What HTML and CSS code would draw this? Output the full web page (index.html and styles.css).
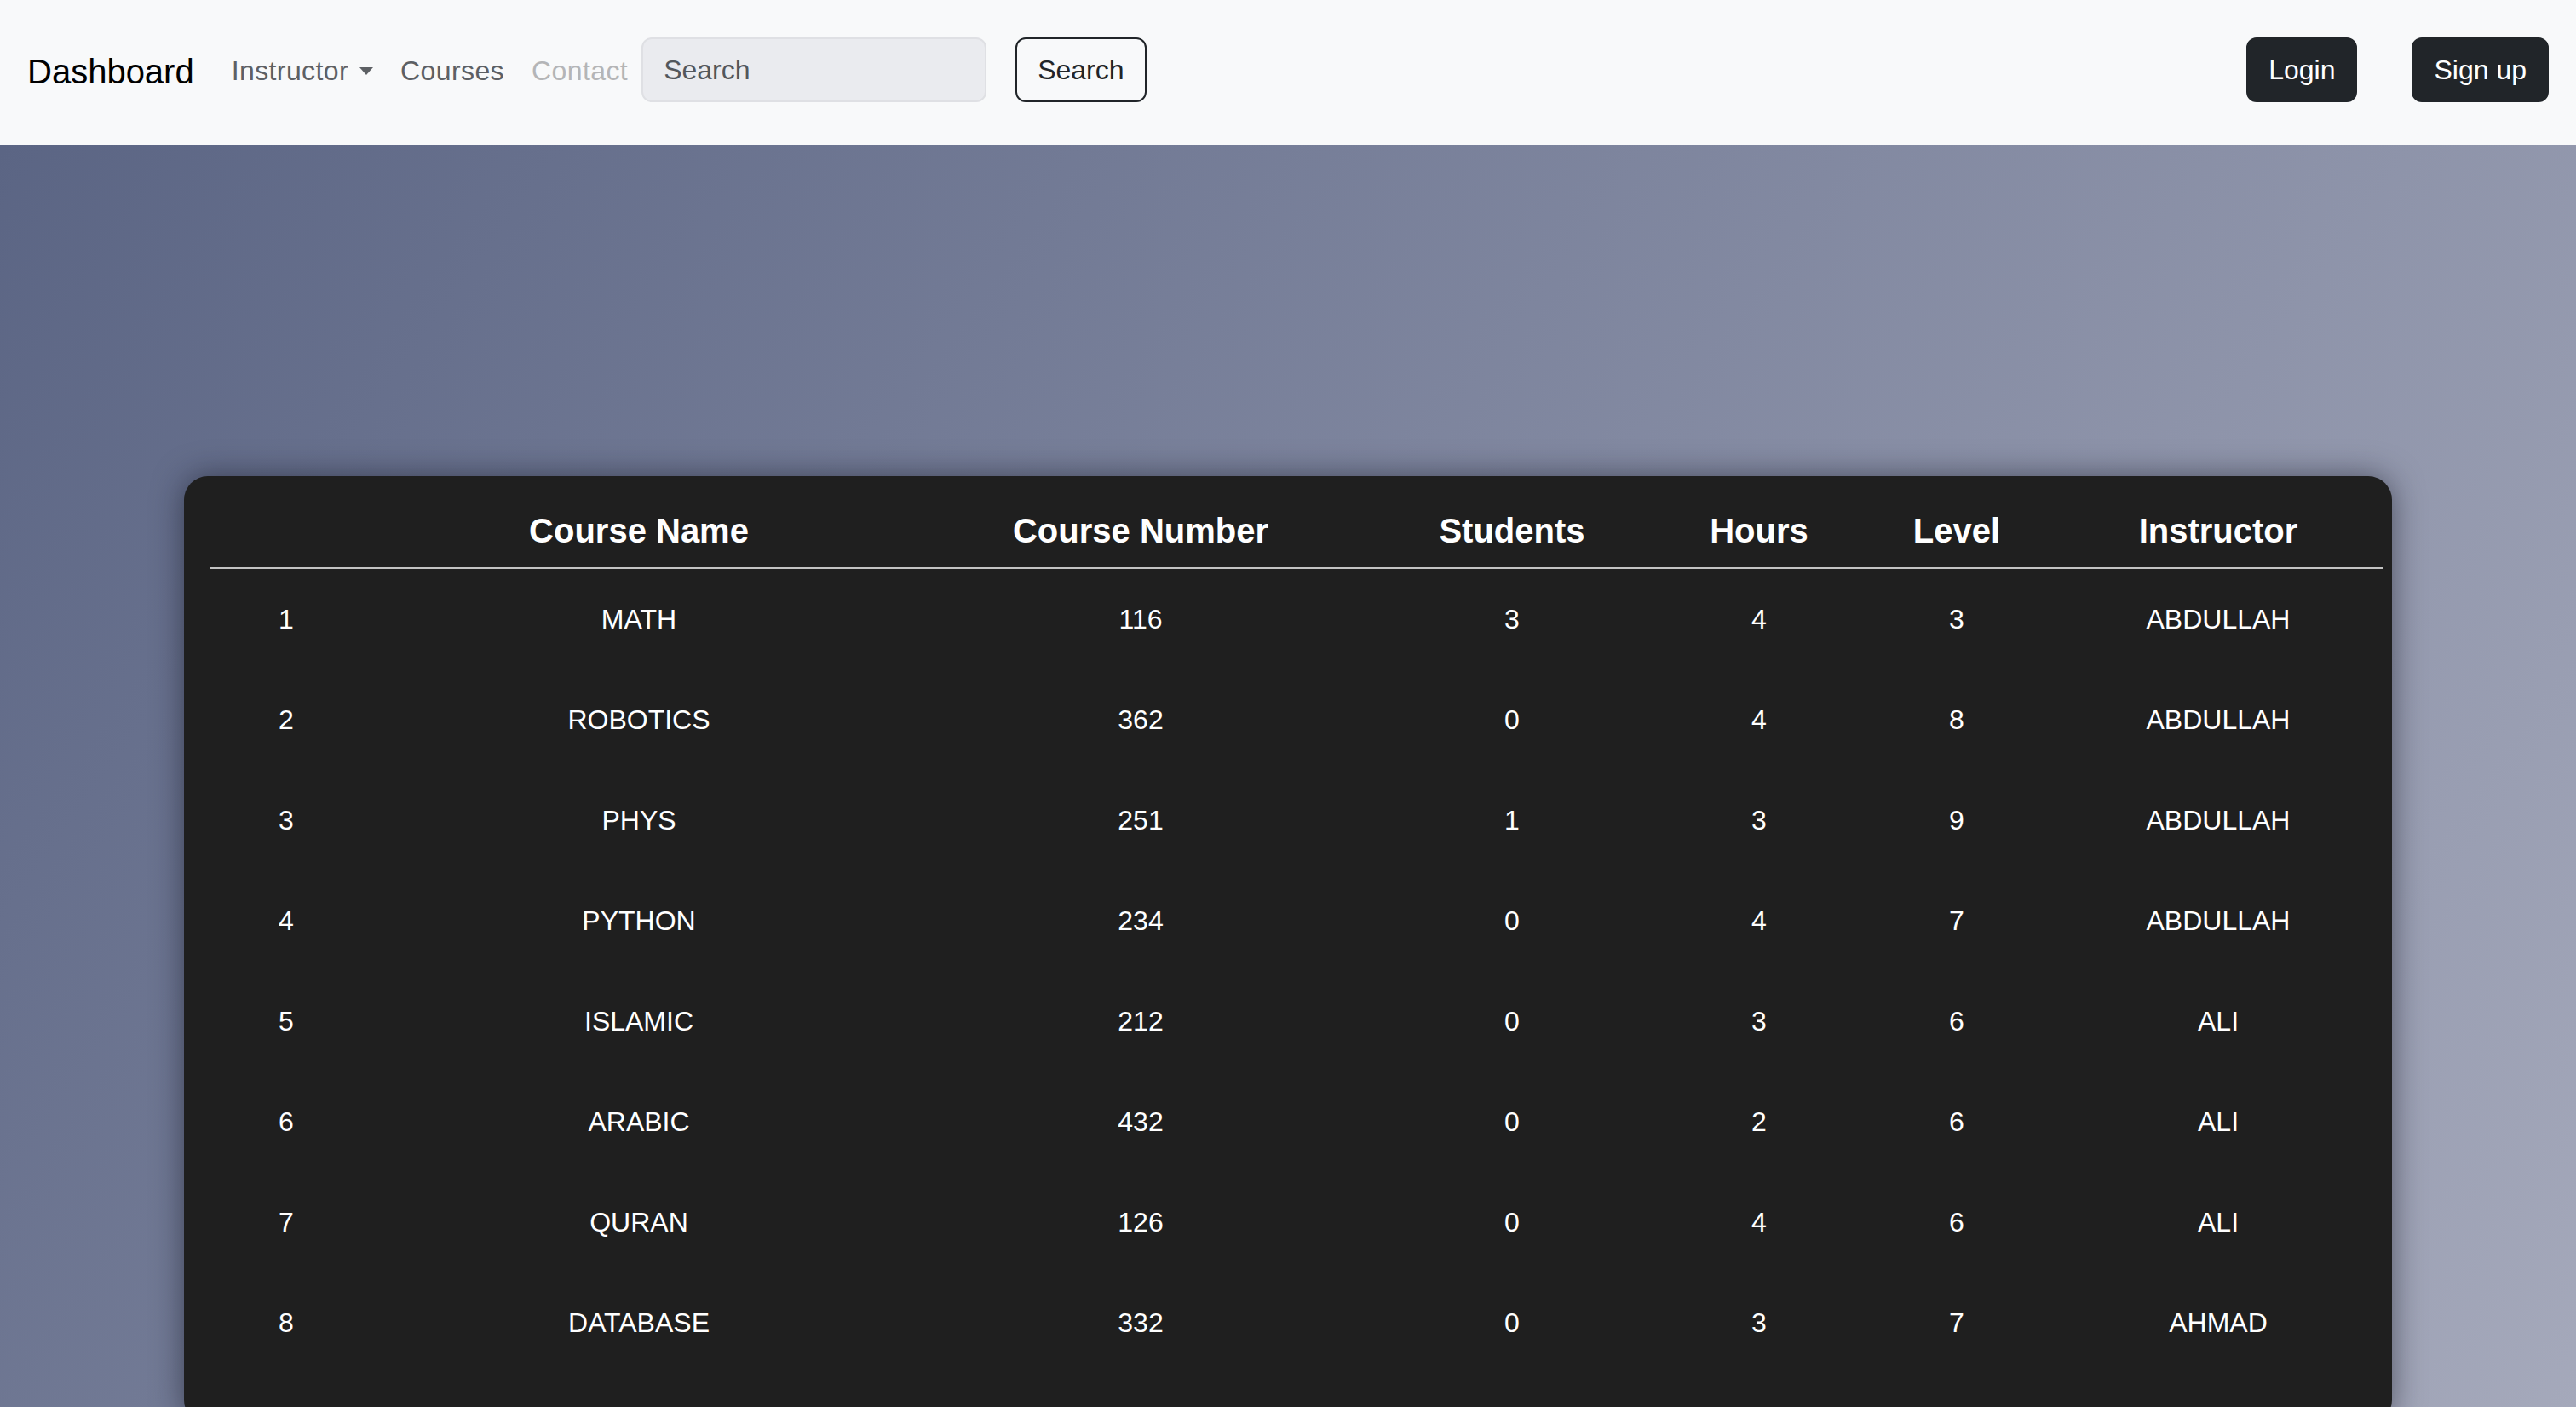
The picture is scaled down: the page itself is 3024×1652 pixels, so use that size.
FILE: index.html
```html
<!DOCTYPE html>
<html lang="en">
<head>
<meta charset="utf-8">
<title>Dashboard</title>
<link rel="stylesheet" href="styles.css">
</head>
<body>
<nav class="navbar">
  <a class="brand" href="#">Dashboard</a>
  <ul class="nav">
    <li><a class="nav-link dropdown" href="#">Instructor<span class="caret"></span></a></li>
    <li><a class="nav-link" href="#">Courses</a></li>
    <li><a class="nav-link disabled" href="#">Contact</a></li>
  </ul>
  <form class="search">
    <input class="search-input" type="search" placeholder="Search">
    <button class="btn btn-outline" type="button">Search</button>
  </form>
  <div class="auth">
    <button class="btn btn-dark" type="button">Login</button>
    <button class="btn btn-dark" type="button">Sign up</button>
  </div>
</nav>
<main class="main">
  <section class="card">
    <table class="courses">
      <colgroup>
        <col class="c-num"><col class="c-name"><col class="c-number"><col class="c-students"><col class="c-hours"><col class="c-level"><col class="c-instr">
      </colgroup>
      <thead>
        <tr><th></th><th>Course Name</th><th>Course Number</th><th>Students</th><th>Hours</th><th>Level</th><th>Instructor</th></tr>
      </thead>
      <tbody>
        <tr><td>1</td><td>MATH</td><td>116</td><td>3</td><td>4</td><td>3</td><td>ABDULLAH</td></tr>
        <tr><td>2</td><td>ROBOTICS</td><td>362</td><td>0</td><td>4</td><td>8</td><td>ABDULLAH</td></tr>
        <tr><td>3</td><td>PHYS</td><td>251</td><td>1</td><td>3</td><td>9</td><td>ABDULLAH</td></tr>
        <tr><td>4</td><td>PYTHON</td><td>234</td><td>0</td><td>4</td><td>7</td><td>ABDULLAH</td></tr>
        <tr><td>5</td><td>ISLAMIC</td><td>212</td><td>0</td><td>3</td><td>6</td><td>ALI</td></tr>
        <tr><td>6</td><td>ARABIC</td><td>432</td><td>0</td><td>2</td><td>6</td><td>ALI</td></tr>
        <tr><td>7</td><td>QURAN</td><td>126</td><td>0</td><td>4</td><td>6</td><td>ALI</td></tr>
        <tr><td>8</td><td>DATABASE</td><td>332</td><td>0</td><td>3</td><td>7</td><td>AHMAD</td></tr>
      </tbody>
    </table>
  </section>
</main>
</body>
</html>
```
FILE: styles.css
```css
* { box-sizing: border-box; }
html, body { margin: 0; padding: 0; }
body {
  font-family: "Liberation Sans", Arial, sans-serif;
  font-size: 32px;
  line-height: 48px;
  color: #212529;
  background: #a5a9bb;
}
.navbar {
  height: 170px;
  background: #f8f9fa;
  display: flex;
  align-items: center;
  padding: 0 32px 6px 32px;
}
.brand {
  font-size: 40px;
  line-height: 60px;
  color: #000;
  text-decoration: none;
  margin-right: 28px;
  padding-top: 3px;
}
.nav {
  display: flex;
  list-style: none;
  margin: 0;
  padding: 0;
}
.nav-link {
  display: flex;
  align-items: center;
  padding: 0 16px;
  color: #5d6064;
  text-decoration: none;
  line-height: 48px;
  padding-top: 2px;
  letter-spacing: 0.4px;
}
.nav-link.disabled { color: #b4b5b7; }
.caret {
  display: inline-block;
  margin-left: 13px;
  width: 0;
  height: 0;
  border-left: 8px solid transparent;
  border-right: 8px solid transparent;
  border-top: 9px solid #5d6064;
}
.search {
  display: flex;
  align-items: center;
  margin: 0;
}
.search-input {
  width: 405px;
  height: 76px;
  padding: 12px 24px;
  font: inherit;
  color: #212529;
  background: #eaebef;
  border: 2px solid #dfe0e4;
  border-radius: 12px;
  margin-right: 34px;
  outline: none;
}
.search-input::placeholder { color: #53575c; }
.btn {
  font: inherit;
  line-height: 48px;
  padding: 12px 24px;
  border-radius: 12px;
  border: 2px solid #212529;
  cursor: pointer;
}
.btn-outline {
  background: transparent;
  color: #212529;
}
.btn-dark {
  background: #212529;
  color: #fff;
}
.auth {
  margin-left: auto;
  display: flex;
  gap: 64px;
}
.main {
  min-height: calc(100vh - 170px);
  padding: 389px 216px 0 216px;
  background: linear-gradient(126deg, #5b6584 0%, #a5a9bb 100%);
}
.card {
  background: #1f1f1f;
  border-radius: 28px;
  padding: 21px 10px 60px 30px;
  box-shadow: 0 0 36px rgba(20, 22, 35, 0.55);
}
.courses {
  width: 100%;
  border-collapse: collapse;
  table-layout: fixed;
  color: #fff;
  text-align: center;
}
.c-num { width: 180px; }
.c-name { width: 648px; }
.c-number { width: 530px; }
.c-students { width: 342px; }
.c-hours { width: 238px; }
.c-level { width: 226px; }
.c-instr { width: auto; }
.courses th {
  font-size: 40px;
  font-weight: bold;
  line-height: 60px;
  padding: 13px 0 13px 0;
  border-bottom: 2px solid #c3c3c3;
}
.courses td {
  font-size: 32px;
  line-height: 48px;
  padding: 35px 0;
}
```
